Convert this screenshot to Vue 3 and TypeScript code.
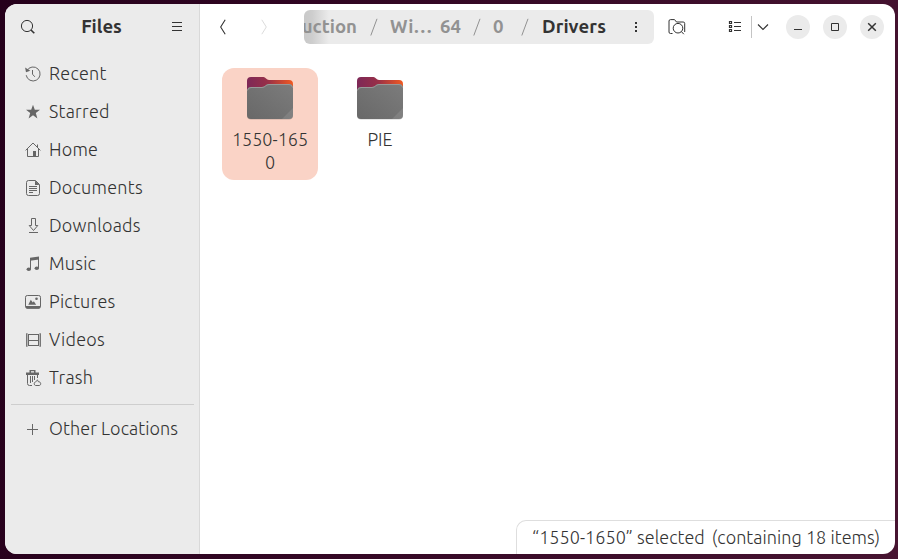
<script setup lang="ts">
interface Place { name: string; icon: string }

const places: Place[] = [
  { name: 'Recent', icon: 'recent' },
  { name: 'Starred', icon: 'star' },
  { name: 'Home', icon: 'home' },
  { name: 'Documents', icon: 'doc' },
  { name: 'Downloads', icon: 'down' },
  { name: 'Music', icon: 'music' },
  { name: 'Pictures', icon: 'picture' },
  { name: 'Videos', icon: 'video' },
  { name: 'Trash', icon: 'trash' },
]

const folders = [
  { lines: ['1550-165', '0'], selected: true },
  { lines: ['PIE'], selected: false },
]
</script>

<template>
  <div class="desktop">
    <div class="window">
      <aside class="sidebar">
        <header class="side-head">
          <svg class="ic16" viewBox="0 0 16 16"><circle cx="7" cy="7" r="5.6" /><path d="M11 11l3.3 3.3" stroke-width="1.6" /></svg>
          <h1>Files</h1>
          <svg class="ic16" viewBox="0 0 16 16"><path d="M3 3.5h10M3 7.5h10M3 11.5h10" /></svg>
        </header>
        <nav>
          <div v-for="p in places" :key="p.name" class="place">
            <svg class="ic16" viewBox="0 0 16 16">
              <template v-if="p.icon === 'recent'">
                <path d="M1.9 4.7A7 7 0 1 1 1.2 9.2M7.5 4v4.2l2.3 2.6" /><path class="fill" d="M.1 1.5l.9 4.7 4.3-1.4z" />
              </template>
              <path v-else-if="p.icon === 'star'" class="fill" d="M8 .8l1.8 5h5.2l-4.2 3.3 1.6 5.3L8 11.3l-4.4 3.1 1.6-5.3L1 5.8h5.2z" />
              <template v-else-if="p.icon === 'home'">
                <path d="M.6 8.4L8 1l7.4 7.4M2.5 7v7.5h11V7M12.5 5V2.5" /><path class="fill" d="M8 9h3v5.5H8z" />
              </template>
              <template v-else-if="p.icon === 'doc'">
                <path d="M3.5.5h7l4 4v9a2 2 0 0 1-2 2h-9a2 2 0 0 1-2-2v-11a2 2 0 0 1 2-2zM4 6.5h8M4 8.5h8M4 10.5h8M4 12.5h4" /><path class="fill" d="M10 .5v4.5h4.5z" />
              </template>
              <path v-else-if="p.icon === 'down'" d="M6.5.5h4v7h2.3L8.500 12.500 4.200 7.500h2.300zM4 14.500h9" />
              <template v-else-if="p.icon === 'music'">
                <path d="M5.500 13V2.500M13.500 12V1.500" /><path class="fill" d="M5 1.700L14 .5v3L5 4.700z" />
                <ellipse class="fill" cx="3.8" cy="13.3" rx="2.2" ry="1.8" /><ellipse class="fill" cx="11.8" cy="12.3" rx="2.2" ry="1.8" />
              </template>
              <template v-else-if="p.icon === 'picture'">
                <rect x=".5" y="1.5" width="15" height="12.5" rx="1.8" /><path class="fill" d="M.5 12h15v1q0 1.700-1.700 1.700H2.200Q.5 14.700.5 13zM3.300 10.800l2.500-5 2 2.700 1-1.200 2.400 3.500z" /><circle class="fill" cx="11.5" cy="4.7" r="1.3" />
              </template>
              <template v-else-if="p.icon === 'video'">
                <path d="M3.500 2v12M13.500 2v12M3.500 2.500h10M3.500 8.500h10M3.500 13.500h10" /><path d="M2 1.500v13M15 1.500v13" stroke-width="1.6" stroke-dasharray="1 1" /><path d="M1.500 1.500v13M15.500 1.500v13" stroke-width=".8" />
              </template>
              <template v-else>
                <path d="M2.500 4v9.500a2 2 0 0 0 2 2H7M12.500 4v4M5.500 6v7M7.500 6v6M9.500 6v4" /><path class="fill" d="M1 2.500h3.500V0h6v2.500H14V5H1z" /><path class="cut" d="M6 1.200h3v1.300H6z" />
                <path class="cover" d="M10.500 15.500a1.900 1.900 0 0 1 0-3.600c1-.4 1.300-.8 1.700-2 .8.400 1.100 1 1.100 1.800 1.400 0 2.400.7 2.400 2s-.8 1.800-1.700 1.800z" />
              </template>
            </svg>
            <span>{{ p.name }}</span>
          </div>
          <div class="divider"></div>
          <div class="place other">
            <svg class="ic16" viewBox="0 0 16 16"><path d="M2 8.500h11M7.500 3v11" /></svg>
            <span>Other Locations</span>
          </div>
        </nav>
      </aside>

      <main class="content">
        <header class="toolbar">
          <svg class="ic16 back" viewBox="0 0 16 16"><path d="M10.200.8L5.700 8l4.500 7.200" stroke-width="1.1" /></svg>
          <svg class="ic16 forward" viewBox="0 0 16 16"><path d="M5.800.8L10.300 8l-4.500 7.200" /></svg>
          <div class="path">
            <span class="crumb clipped">uction</span><span class="slash s1"><svg viewBox="0 0 8 18"><path d="M.8 17.500L7 .8" /></svg></span>
            <span class="crumb win">Wi…</span><span class="crumb arch">64</span>
            <span class="slash s2"><svg viewBox="0 0 8 18"><path d="M.8 17.500L7 .8" /></svg></span><span class="crumb zero">0</span>
            <span class="slash s3"><svg viewBox="0 0 8 18"><path d="M.8 17.500L7 .8" /></svg></span><span class="crumb current">Drivers</span>
            <svg class="ic16 dots" viewBox="0 0 16 16"><path class="fill" d="M7 3h2v2H7zM7 7h2v2H7zM7 11h2v2H7z" /></svg>
          </div>
          <svg class="find" viewBox="0 0 18 16"><path d="M4.500 14.500h-2a1.500 1.500 0 0 1-1.500-1.500V2A1.500 1.500 0 0 1 2.500.6h4L8.500 3h6.700a1.500 1.500 0 0 1 1.500 1.500V13" /><circle cx="10" cy="9.2" r="4.8" /><path d="M13.300 12.500l2.500 2.700" /></svg>
          <svg class="ic16 list" viewBox="0 0 16 16"><path d="M2.500 2.500h2v2h-2zM2.500 6.500h2v2h-2zM2.500 10.500h2v2h-2z" stroke-width="1.2" /><path d="M7 3.500h7M7 7.500h7M7 11.500h7" stroke-width="1.2" /></svg>
          <i class="rule"></i>
          <svg class="chev" viewBox="0 0 12 8"><path d="M1 1.500l5 5 5-5" stroke-width="1.1" /></svg>
          <div class="controls">
            <button aria-label="Minimize"><svg class="ic16" viewBox="0 0 16 16"><path d="M4 10.500h8" /></svg></button>
            <button aria-label="Maximize"><svg class="ic16" viewBox="0 0 16 16"><path d="M4.500 4.500h7v7h-7z" /></svg></button>
            <button aria-label="Close"><svg class="ic16" viewBox="0 0 16 16"><path d="M4.200 4.200l7.600 7.600M11.800 4.200l-7.600 7.600" stroke-width="1.5" /></svg></button>
          </div>
        </header>
        <section class="grid">
          <div v-for="(f, i) in folders" :key="i" class="tile" :class="{ selected: f.selected }">
            <svg class="folder" viewBox="0 0 52 48">
              <defs>
                <linearGradient :id="'tab' + i" x1="0" y1="0" x2="1" y2="0"><stop offset="0" stop-color="#7d2857" /><stop offset=".45" stop-color="#982f48" /><stop offset="1" stop-color="#f05a22" /></linearGradient>
                <linearGradient :id="'body' + i" x1="0" y1="1" x2="1" y2="0"><stop offset="0" stop-color="#686868" /><stop offset="1" stop-color="#7c7c7c" /></linearGradient>
              </defs>
              <rect class="shadow" x="3" y="12" width="46" height="33.5" rx="4" />
              <path class="solid" :fill="`url(#tab${i})`" d="M3 7a4 4 0 0 1 4-4h12.500c2 0 3 3 5.500 3h20a4 4 0 0 1 4 4v12H3z" />
              <path class="solid" :fill="`url(#body${i})`" d="M3 17a4 4 0 0 1 4-4h11c3.500 0 3.500-3 7-3h20a4 4 0 0 1 4 4v27a4 4 0 0 1-4 4H7a4 4 0 0 1-4-4z" />
              <path class="shine" d="M3.500 16.500q.5-3 3.500-3h11c3.500 0 3.500-3 7-3h20q3 0 3.500 3" />
              <path class="corner" d="M38 45L49 34v7a4 4 0 0 1-4 4z" />
            </svg>
            <div class="label"><div v-for="l in f.lines" :key="l">{{ l }}</div></div>
          </div>
        </section>
        <footer class="status"><span>“1550-1650” selected</span><span>(containing 18 items)</span></footer>
      </main>
    </div>
  </div>
</template>

<style>
body { margin: 0; overflow: hidden; }
</style>
<style scoped>
* { box-sizing: border-box; }
.desktop {
  width: 898px; height: 559px; padding: 4px 3px 5px 5px;
  background: linear-gradient(100deg, #25001b 0%, #330724 40%, #471431 100%);
  font: 300 18px/24px Ubuntu, "Open Sans", sans-serif; color: #333;
}
.window { display: flex; height: 550px; border-radius: 12px; overflow: hidden; background: #fff; }
svg { display: block; flex: none; fill: none; stroke: currentColor; overflow: visible; }
.ic16 { width: 16px; height: 16px; }
.fill { fill: currentColor; stroke: none; }
.cut { fill: #ebebeb; stroke: none; }
.cover { fill: #ebebeb; }
.solid { stroke: none; }
.sidebar { width: 195px; background: #ebebeb; border-right: 1px solid #d9d9d9; }
.side-head { display: flex; align-items: center; justify-content: space-between; height: 46px; padding: 0 14px 0 15px; }
h1 { margin: 0 2px 0 0; font-size: 18.6px; font-weight: 700; line-height: 24px; }
nav { padding-top: 5px; }
.place { display: flex; align-items: center; height: 38px; padding-left: 20px; gap: 8px; white-space: nowrap; letter-spacing: .25px; }
.place span { padding-bottom: 2px; }
.other { letter-spacing: .07px; }
.place svg { color: #666; }
.divider { height: 1px; margin: 7px 5px 5px 6px; background: #cecece; }
.content { flex: 1; display: flex; flex-direction: column; min-width: 0; }
.toolbar { display: flex; align-items: center; height: 46px; padding-left: 15px; }
.forward { margin-left: 25px; color: #dcdcdc; }
.path { display: flex; align-items: center; width: 350px; height: 34px; margin-left: 32px; border-radius: 6px; overflow: hidden; font-size: 18.6px; font-weight: 700; color: #929292; background: linear-gradient(90deg, #c9c9c9 0, #cdcdcd 8px, #ebebeb 25px); }
.crumb { white-space: nowrap; }
.clipped { display: flex; justify-content: flex-end; width: 53px; }
.slash { display: flex; justify-content: center; }
.slash svg { width: 8px; height: 18px; }
.s1 { width: 33px; }
.win { width: 50px; }
.arch { width: 20px; }
.s2 { width: 33px; }
.zero { width: 15px; }
.s3 { width: 34px; }
.current { width: 76px; color: #333; letter-spacing: .15px; }
.dots { margin-left: 10px; color: #333; }
.find { width: 18px; height: 16px; margin-left: 14px; }
.list { margin-left: 41px; }
.rule { width: 1px; height: 22px; margin-left: 8px; background: #c4c4c4; }
.chev { width: 12px; height: 8px; margin-left: 5px; }
.controls { display: flex; gap: 13px; margin-left: 17px; }
button { display: flex; align-items: center; justify-content: center; width: 24px; height: 24px; padding: 0; border: 0; border-radius: 50%; background: #ebebeb; color: #333; }
.grid { flex: 1; display: flex; align-items: flex-start; gap: 14px; padding: 18px 22px; }
.tile { display: flex; flex-direction: column; align-items: center; width: 96px; height: 112px; padding-top: 6px; border-radius: 12px; text-align: center; }
.selected { background: #fad3c6; }
.folder { width: 52px; height: 48px; }
.shadow { fill: #000; fill-opacity: .2; stroke: none; }
.shine { stroke: #999; }
.corner { fill: #fff; fill-opacity: .1; stroke: none; }
.label { margin-top: 6px; line-height: 23px; }
.status { align-self: flex-end; display: flex; gap: 7px; align-items: center; width: 379px; height: 34px; padding: 0 0 2px 15px; border: 1px solid #dedede; border-width: 1px 0 0 1px; border-radius: 10px 0 0 0; white-space: nowrap; letter-spacing: .04px; }
</style>
